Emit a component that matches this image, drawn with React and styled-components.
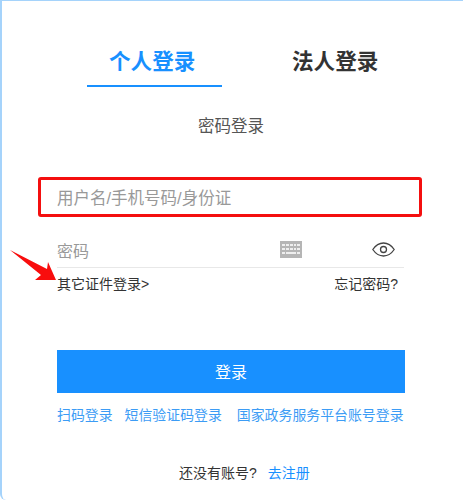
import React from "react";
import styled, { createGlobalStyle } from "styled-components";

const Global = createGlobalStyle`
  html, body { margin: 0; padding: 0; background: #fff; }
  body { font-family: "Liberation Sans", "Noto Sans CJK SC", sans-serif; }
`;

const Card = styled.div`
  position: relative;
  box-sizing: border-box;
  width: 463px;
  height: 500px;
  border-top: 1px solid #a5d3fb;
  border-left: 2px solid #a5d3fb;
  border-bottom-left-radius: 6px;
  padding: 0 0 0 55px;
  overflow: hidden;
`;

const Tabs = styled.div`
  display: flex;
  margin: 44px 0 0 30px;
`;

const Tab = styled.div`
  box-sizing: border-box;
  width: ${(p) => p.$w}px;
  height: 42px;
  padding-left: ${(p) => p.$pad}px;
  font-size: 21.6px;
  font-weight: 700;
  line-height: 34px;
  white-space: nowrap;
  color: ${(p) => (p.$active ? "#1890ff" : "#333")};
  border-bottom: ${(p) => (p.$active ? "2px solid #1890ff" : "2px solid transparent")};
`;

const Subtitle = styled.div`
  margin-top: 26px;
  padding-left: 141px;
  font-size: 16.5px;
  line-height: 26px;
  color: #555;
`;

const UserField = styled.div`
  margin-top: 46px;
  height: 26px;
  font-size: 16.5px;
  line-height: 26px;
  color: #999;
`;

const PasswordField = styled.div`
  display: flex;
  align-items: center;
  box-sizing: border-box;
  width: 347px;
  height: 36px;
  margin-top: 21px;
  border-bottom: 1px solid #e8e8e8;
  font-size: 16px;
  color: #999;
`;

const PasswordLabel = styled.span`
  width: 223px;
`;

const EyeSlot = styled.span`
  display: flex;
  margin-left: 70px;
`;

const LinkRow = styled.div`
  display: flex;
  justify-content: space-between;
  width: 341px;
  margin-top: 5px;
  font-size: 14px;
  line-height: 22px;
  color: #333;
`;

const LoginButton = styled.button`
  display: block;
  width: 348px;
  height: 43px;
  margin-top: 55px;
  padding: 0 0 2px;
  border: 0;
  background: #1890ff;
  color: #fff;
  font-family: inherit;
  font-size: 16px;
  text-align: center;
`;

const AltLogins = styled.div`
  display: flex;
  margin-top: 11px;
  font-size: 13.9px;
  line-height: 22px;
  color: #3c9cf5;
`;

const AltLogin = styled.span`
  margin-left: ${(p) => p.$gap}px;
  white-space: nowrap;
`;

const Footer = styled.div`
  margin-top: 36px;
  padding-left: 122px;
  font-size: 14px;
  line-height: 22px;
  color: #333;
`;

const Register = styled.span`
  margin-left: 11px;
  color: #1890ff;
`;

const Highlight = styled.div`
  position: absolute;
  left: 36px;
  top: 176px;
  box-sizing: border-box;
  width: 384px;
  height: 40px;
  border: 3px solid #f40f0f;
  border-radius: 3px;
`;

const Arrow = styled.svg`
  position: absolute;
  left: 8px;
  top: 249px;
`;

const Keyboard = () => (
  <svg width="22" height="17" viewBox="0 0 22 17">
    <rect width="22" height="17" fill="#b5b5b5" />
    <g fill="#eee">
      <rect x="2" y="3" width="3" height="2" />
      <rect x="6" y="3" width="3" height="2" />
      <rect x="10" y="3" width="3" height="2" />
      <rect x="14" y="3" width="2" height="2" />
      <rect x="17" y="3" width="3" height="2" />
      <rect x="2" y="7" width="3" height="2" />
      <rect x="6" y="7" width="3" height="2" />
      <rect x="10" y="7" width="3" height="2" />
      <rect x="14" y="7" width="2" height="2" />
      <rect x="17" y="7" width="3" height="2" />
      <rect x="2" y="11" width="3" height="2" />
      <rect x="6" y="11" width="10" height="2" />
      <rect x="17" y="11" width="3" height="2" />
    </g>
  </svg>
);

const Eye = () => (
  <svg width="23" height="15" viewBox="0 0 23 15" fill="none" stroke="#444" strokeWidth="1.3">
    <path d="M0.8 7.5C4 2.8 7.5 1 11.5 1s7.5 1.8 10.7 6.5C19 12.2 15.5 14 11.5 14S4 12.2 0.8 7.5Z" />
    <circle cx="11.5" cy="7.5" r="3" />
  </svg>
);

export default function App() {
  return (
    <>
      <Global />
      <Card>
        <Tabs>
          <Tab $active $w={135} $pad={22}>个人登录</Tab>
          <Tab $w={160} $pad={70}>法人登录</Tab>
        </Tabs>
        <Subtitle>密码登录</Subtitle>
        <UserField>用户名/手机号码/身份证</UserField>
        <PasswordField>
          <PasswordLabel>密码</PasswordLabel>
          <Keyboard />
          <EyeSlot><Eye /></EyeSlot>
        </PasswordField>
        <LinkRow>
          <span>其它证件登录&gt;</span>
          <span>忘记密码?</span>
        </LinkRow>
        <LoginButton>登录</LoginButton>
        <AltLogins>
          <AltLogin $gap={0}>扫码登录</AltLogin>
          <AltLogin $gap={12}>短信验证码登录</AltLogin>
          <AltLogin $gap={15}>国家政务服务平台账号登录</AltLogin>
        </AltLogins>
        <Footer>
          还没有账号?<Register>去注册</Register>
        </Footer>
        <Highlight />
        <Arrow width="48" height="36" viewBox="0 0 48 36">
          <path d="M0 0L37 19L38 12L46 30L25 30L31 25Z" fill="#f80d0d" />
        </Arrow>
      </Card>
    </>
  );
}
